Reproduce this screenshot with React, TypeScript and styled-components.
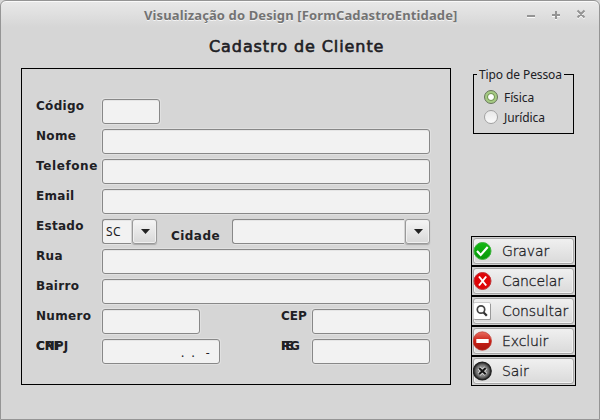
import React from 'react';
import styled, { createGlobalStyle } from 'styled-components';

const GlobalStyle = createGlobalStyle`
  * { box-sizing: border-box; }
  body { margin: 0; background: #d6d6d6; overflow: hidden; }
`;

const Window = styled.div`
  width: 600px;
  height: 420px;
  display: flex;
  flex-direction: column;
  border: 1px solid #959595;
  border-radius: 6px 6px 0 0;
  background: linear-gradient(#e9e9e9 0, #d6d6d6 26px);
  box-shadow: inset 0 1px 0 #fafafa;
  color: #202024;
  font-family: 'Noto Sans', sans-serif;
`;

const TitleBar = styled.header`
  height: 27px;
  display: grid;
  grid-template-columns: 1fr 76px;
  align-items: center;
`;

const WindowTitle = styled.div`
  padding-left: 143px;
  font: bold 13px/20px 'Noto Sans', sans-serif;
  letter-spacing: 0.12px;
  color: #737373;
  text-shadow: 0 1px 0 #f4f4f4;
  white-space: nowrap;
`;

const FormTitle = styled.h1`
  height: 40px;
  margin: 0;
  padding: 9px 0 0 208px;
  font: 400 16px/20px 'DejaVu Sans', sans-serif;
  -webkit-text-stroke: 0.6px #202024;
  letter-spacing: 0.92px;
  white-space: nowrap;
`;

const Content = styled.main`
  display: grid;
  grid-template-columns: 430px 105px;
  column-gap: 20px;
  padding-left: 20px;
`;

const Panel = styled.section`
  height: 317px;
  border: 1px solid #000;
  padding: 30px 0 0 14px;
`;

const Row = styled.div`
  height: 30px;
  display: flex;
  align-items: flex-start;
`;

const Label = styled.label<{ $w: number; $top?: number; $track?: number }>`
  flex: none;
  display: grid;
  width: ${p => p.$w}px;
  margin-top: ${p => p.$top ?? 0}px;
  font: bold 12px/14px 'DejaVu Sans', sans-serif;
  letter-spacing: ${p => p.$track ?? 0.3}px;
  white-space: nowrap;

  > span { grid-area: 1 / 1; }
`;

const Field = styled.div<{ $w: number; $gap?: number }>`
  flex: none;
  width: ${p => p.$w}px;
  height: 25px;
  margin-right: ${p => p.$gap ?? 0}px;
  padding-right: 9px;
  border: 1px solid #888;
  border-radius: 3px;
  background: #f2f2f2;
  box-shadow: 0 0 0 1px #e0e0e0, inset 0 1px 0 #e5e5e5;
  font: 12px/25px 'Noto Sans', sans-serif;
  letter-spacing: 0.4px;
  text-align: right;
  white-space: pre;
`;

const Combo = styled.div<{ $w: number; $gap?: number }>`
  flex: none;
  width: ${p => p.$w}px;
  height: 25px;
  display: grid;
  grid-template-columns: 1fr 25px;
  column-gap: 1px;
  margin-right: ${p => p.$gap ?? 0}px;
`;

const ComboValue = styled.div`
  border: 1px solid #888;
  border-right: 0;
  border-radius: 3px 0 0 3px;
  background: #f2f2f2;
  box-shadow: 0 1px 0 #e3e3e3, inset 0 1px 0 #e5e5e5;
  padding-left: 3px;
  font: 12px/23px 'Noto Sans', sans-serif;
  letter-spacing: 0.3px;
`;

const ComboButton = styled.div`
  display: flex;
  align-items: center;
  justify-content: center;
  padding: 0 0 1px 2px;
  border: 1px solid #999;
  border-radius: 3px;
  background: linear-gradient(#f5f5f5, #d8d8d8);
  box-shadow: 0 1px 1px #aaa, inset 0 0 0 1px #f0f0f0;
`;

const Side = styled.aside`
  display: flex;
  flex-direction: column;
`;

const TypeBox = styled.fieldset`
  width: 101px;
  height: 66px;
  margin: 0 0 102px 2px;
  padding: 6px 0 0 10px;
  border: 1px solid #000;
  font: 12px/15px 'Noto Sans', sans-serif;

  legend {
    margin-left: -7px;
    padding: 0 2px;
    height: 13px;
    line-height: 13px;
    letter-spacing: -0.1px;
    white-space: nowrap;
  }
`;

const Option = styled.div`
  height: 20px;
  display: flex;
  align-items: center;
  gap: 6px;
  letter-spacing: -0.1px;
`;

const Radio = styled.span<{ $on?: boolean }>`
  width: 14px;
  height: 14px;
  border-radius: 50%;
  border: 1px solid ${p => (p.$on ? '#66745a' : '#a2a2a2')};
  background: ${p => (p.$on ? 'radial-gradient(circle, #fff 2.4px, #759756 3.4px, #a6cb84 4.4px)' : 'linear-gradient(#e8e8e8, #fafafa)')};
`;

const Action = styled.button`
  width: 105px;
  height: 30px;
  padding: 1px;
  border: 1px solid #000;
  background: #d0d0d0;
  color: #202024;
`;

const ActionFace = styled.span`
  height: 26px;
  display: flex;
  align-items: center;
  gap: 9px;
  border: 1px solid #a6a6a6;
  border-radius: 3px;
  background: linear-gradient(#f0f0f0, #dadada);
  box-shadow: inset 0 0 0 1px #f1f1f1;
  font: 200 14px/22px 'DejaVu Sans', sans-serif;
  -webkit-text-stroke: 0.3px #202024;
  letter-spacing: -0.12px;
  white-space: nowrap;

  svg { flex: none; margin-left: -1px; }
`;

type IconKind = 'save' | 'cancel' | 'search' | 'delete' | 'exit';

const ActionIcon = ({ kind }: { kind: IconKind }) => (
  <svg width="20" height="20" viewBox="0 0 20 20" fill="none">
    <defs>
      <linearGradient id="green" x2="0" y2="1"><stop stopColor="#14b914" /><stop offset="1" stopColor="#079609" /></linearGradient>
      <linearGradient id="red" x2="0" y2="1"><stop stopColor="#e96d60" /><stop offset=".5" stopColor="#c92117" /><stop offset="1" stopColor="#a91813" /></linearGradient>
      <radialGradient id="dark"><stop stopColor="#bbb" /><stop offset=".65" stopColor="#777" /><stop offset="1" stopColor="#222" /></radialGradient>
    </defs>
    {kind === 'save' && <><circle cx="9.5" cy="10" r="8.5" fill="url(#green)" stroke="#3fb33f" /><path d="m4 10 3.7 4 7-8" stroke="#fff" strokeWidth="2.1" /></>}
    {kind === 'cancel' && <><circle cx="9.5" cy="10" r="8.5" fill="#df0508" stroke="#c03538" /><path d="m6 5.5 7.2 9m0-9-7.2 9" stroke="#fff" strokeWidth="2" /></>}
    {kind === 'search' && <><rect x=".5" y="1.5" width="17" height="17" rx="1.5" fill="#fff" stroke="#ccc" /><path d="M1.5 18.5h16V3" stroke="#999" /><circle cx="8" cy="8.5" r="3.7" stroke="#444" strokeWidth="1.7" /><path d="m10.7 11.5 3.1 3.2" stroke="#333" strokeWidth="2.3" /></>}
    {kind === 'delete' && <><circle cx="9.3" cy="10" r="9.2" fill="url(#red)" stroke="#bd3931" strokeWidth=".7" /><rect x="3.3" y="8" width="12.4" height="4" rx=".5" fill="#fff" /></>}
    {kind === 'exit' && <><circle cx="9.3" cy="10" r="8.9" fill="url(#dark)" stroke="#222" strokeWidth="1.3" /><path d="m6 6.9 6.8 6.4m0-6.4L6 13.3" stroke="#ddd" strokeWidth="3.8" /><path d="m6.1 7 6.6 6.2m0-6.2-6.6 6.2" stroke="#171717" strokeWidth="2.1" /></>}
  </svg>
);

const Arrow = () => <svg width="9" height="5" viewBox="0 0 9 5"><path d="M0 0h9L4.5 5Z" fill="#222" /></svg>;

const WindowControls = () => (
  <svg width="76" height="24" viewBox="0 0 76 24" fill="none">
    <g stroke="#fafafa" strokeWidth="2"><path d="M4 14h8M29 13h8M33 9v8M54.5 8.5l7 7m0-7-7 7" /></g>
    <g stroke="#949494" strokeWidth="2"><path d="M4 13h8M29 12h8M33 8v8M54.5 7.5l7 7m0-7-7 7" /></g>
  </svg>
);

const actions: { kind: IconKind; text: string }[] = [
  { kind: 'save', text: 'Gravar' },
  { kind: 'cancel', text: 'Cancelar' },
  { kind: 'search', text: 'Consultar' },
  { kind: 'delete', text: 'Excluir' },
  { kind: 'exit', text: 'Sair' },
];

export default function App() {
  return (
    <>
      <GlobalStyle />
      <Window>
        <TitleBar>
          <WindowTitle>Visualização do Design [FormCadastroEntidade]</WindowTitle>
          <WindowControls />
        </TitleBar>
        <FormTitle>Cadastro de Cliente</FormTitle>
        <Content>
          <Panel>
            <Row><Label $w={66}>Código</Label><Field $w={58} /></Row>
            {['Nome', 'Telefone', 'Email'].map(text => (
              <Row key={text}><Label $w={66} $track={text === 'Telefone' ? 0.6 : undefined}>{text}</Label><Field $w={328} /></Row>
            ))}
            <Row>
              <Label $w={66}>Estado</Label>
              <Combo $w={55} $gap={14}><ComboValue>SC</ComboValue><ComboButton><Arrow /></ComboButton></Combo>
              <Label $w={61} $top={10} $track={0.45}>Cidade</Label>
              <Combo $w={198}><ComboValue /><ComboButton><Arrow /></ComboButton></Combo>
            </Row>
            {['Rua', 'Bairro'].map(text => (
              <Row key={text}><Label $w={66}>{text}</Label><Field $w={328} /></Row>
            ))}
            <Row>
              <Label $w={66}>Numero</Label><Field $w={98} $gap={81} />
              <Label $w={31} $track={0}>CEP</Label><Field $w={118} />
            </Row>
            <Row>
              <Label $w={66} $track={0}><span>CPF</span><span>CNPJ</span></Label>
              <Field $w={118} $gap={61}>{'.  .   -'}</Field>
              <Label $w={31} $track={-0.2}><span>RG</span><span>IE</span></Label><Field $w={118} />
            </Row>
          </Panel>
          <Side>
            <TypeBox>
              <legend>Tipo de Pessoa</legend>
              <Option><Radio $on />Física</Option>
              <Option><Radio />Jurídica</Option>
            </TypeBox>
            {actions.map(a => (
              <Action key={a.kind}><ActionFace><ActionIcon kind={a.kind} />{a.text}</ActionFace></Action>
            ))}
          </Side>
        </Content>
      </Window>
    </>
  );
}
